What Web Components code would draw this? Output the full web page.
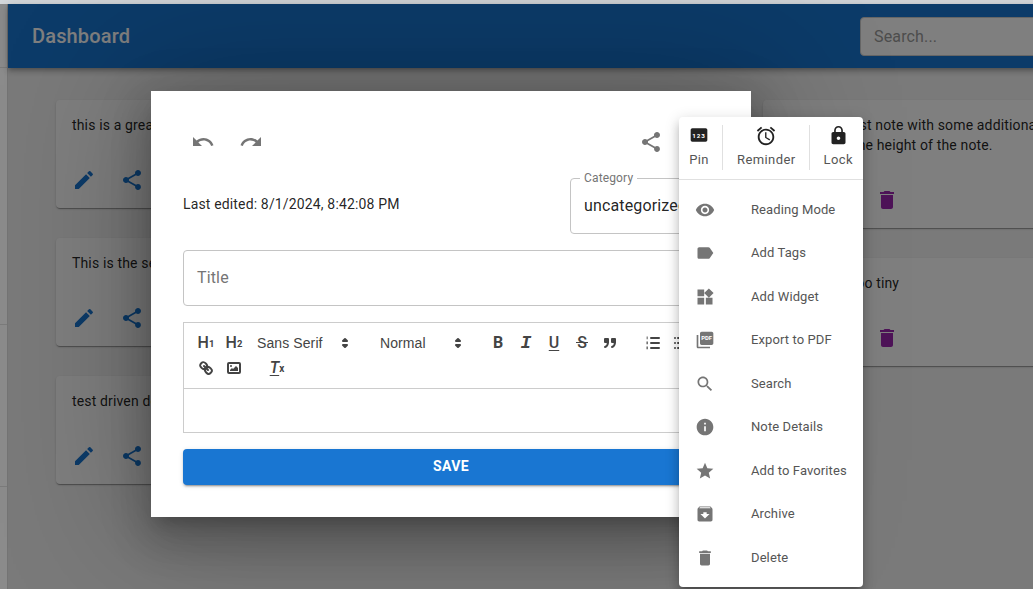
<!DOCTYPE html>
<html>
<head>
<meta charset="utf-8">
<title>Dashboard</title>
<style>
  html, body { margin: 0; height: 100%; overflow: hidden; font-family: Roboto, "Liberation Sans", sans-serif; }
</style>
</head>
<body>

<app-shell>
  <app-header heading="Dashboard" placeholder="Search..."></app-header>
  <note-board>
    <div slot="first">
      <note-card>this is a great note</note-card>
      <note-card>This is the seed</note-card>
      <note-card>test driven development</note-card>
    </div>
    <div slot="third">
      <note-card>This is my test note with some additional text to increase the height of the note.</note-card>
      <note-card>This one is too tiny</note-card>
    </div>
  </note-board>
  <modal-backdrop>
    <note-modal></note-modal>
    <note-menu>
      <top-action slot="top" icon="pin" size="20" class="start">Pin</top-action>
      <top-action slot="top" icon="alarm" size="22" class="mid">Reminder</top-action>
      <top-action slot="top" icon="lock" size="21" class="end">Lock</top-action>
      <menu-item icon="visibility">Reading Mode</menu-item>
      <menu-item icon="label">Add Tags</menu-item>
      <menu-item icon="widgets">Add Widget</menu-item>
      <menu-item icon="pdf">Export to PDF</menu-item>
      <menu-item icon="search">Search</menu-item>
      <menu-item icon="info">Note Details</menu-item>
      <menu-item icon="star">Add to Favorites</menu-item>
      <menu-item icon="archive">Archive</menu-item>
      <menu-item icon="delete">Delete</menu-item>
    </note-menu>
  </modal-backdrop>
</app-shell>

<script>
const ICONS = {
  edit: '<path d="M3 17.25V21h3.75L17.81 9.94l-3.75-3.75L3 17.25zM20.71 7.04c.39-.39.39-1.02 0-1.41l-2.34-2.34a.9959.9959 0 0 0-1.41 0l-1.83 1.83 3.75 3.75 1.83-1.83z"/>',
  share: '<path d="M18 16.08c-.76 0-1.44.3-1.96.77L8.91 12.7c.05-.23.09-.46.09-.7s-.04-.47-.09-.7l7.05-4.11c.54.5 1.25.81 2.04.81 1.66 0 3-1.34 3-3s-1.34-3-3-3-3 1.34-3 3c0 .24.04.47.09.7L8.04 9.81C7.5 9.31 6.79 9 6 9c-1.66 0-3 1.34-3 3s1.34 3 3 3c.79 0 1.5-.31 2.04-.81l7.12 4.16c-.05.21-.08.43-.08.65 0 1.61 1.31 2.92 2.92 2.92s2.92-1.31 2.92-2.92-1.31-2.92-2.92-2.92z"/>',
  delete: '<path d="M6 19c0 1.1.9 2 2 2h8c1.1 0 2-.9 2-2V7H6v12zM19 4h-3.5l-1-1h-5l-1 1H5v2h14V4z"/>',
  undo: '<path d="M12.5 8c-2.65 0-5.05.99-6.9 2.6L2 7v9h9l-3.62-3.62c1.39-1.16 3.16-1.88 5.12-1.88 3.54 0 6.55 2.31 7.6 5.5l2.37-.78C21.08 11.03 17.15 8 12.5 8z"/>',
  redo: '<path d="M18.4 10.6C16.55 8.99 14.15 8 11.5 8c-4.65 0-8.58 3.03-9.96 7.22L3.9 16c1.05-3.19 4.05-5.5 7.6-5.5 1.95 0 3.73.72 5.12 1.88L13 16h9V7l-3.6 3.6z"/>',
  more: '<path d="M12 8c1.1 0 2-.9 2-2s-.9-2-2-2-2 .9-2 2 .9 2 2 2zm0 2c-1.1 0-2 .9-2 2s.9 2 2 2 2-.9 2-2-.9-2-2-2zm0 6c-1.1 0-2 .9-2 2s.9 2 2 2 2-.9 2-2-.9-2-2-2z"/>',
  pin: '<path d="M20 4H4c-1.1 0-2 .9-2 2v12c0 1.1.9 2 2 2h16c1.1 0 2-.9 2-2V6c0-1.1-.9-2-2-2z"/><text x="12" y="15" text-anchor="middle" fill="#fff" font-size="7.5" font-weight="700" letter-spacing="1" font-family="Roboto, sans-serif">123</text>',
  alarm: '<path d="M22 5.72l-4.6-3.86-1.29 1.53 4.6 3.86L22 5.72zM7.88 3.39L6.6 1.86 2 5.71l1.29 1.53 4.59-3.85zM12.5 8H11v6l4.75 2.85.75-1.23-4-2.37V8zM12 4c-4.97 0-9 4.03-9 9s4.03 9 9 9 9-4.03 9-9-4.03-9-9-9zm0 16c-3.87 0-7-3.13-7-7s3.13-7 7-7 7 3.13 7 7-3.13 7-7 7z"/>',
  lock: '<path d="M18 8h-1V6c0-2.76-2.24-5-5-5S7 3.24 7 6v2H6c-1.1 0-2 .9-2 2v10c0 1.1.9 2 2 2h12c1.1 0 2-.9 2-2V10c0-1.1-.9-2-2-2zm-6 9c-1.1 0-2-.9-2-2s.9-2 2-2 2 .9 2 2-.9 2-2 2zm3.1-9H8.9V6c0-1.71 1.39-3.1 3.1-3.1 1.71 0 3.1 1.39 3.1 3.1v2z"/>',
  visibility: '<path d="M12 4.5C7 4.5 2.73 7.61 1 12c1.73 4.39 6 7.5 11 7.5s9.27-3.11 11-7.5c-1.73-4.39-6-7.5-11-7.5zM12 17c-2.76 0-5-2.24-5-5s2.24-5 5-5 5 2.24 5 5-2.24 5-5 5zm0-8c-1.66 0-3 1.34-3 3s1.34 3 3 3 3-1.34 3-3-1.34-3-3-3z"/>',
  label: '<path d="M17.63 5.84C17.27 5.33 16.67 5 16 5L5 5.01C3.9 5.01 3 5.9 3 7v10c0 1.1.9 1.99 2 1.99L16 19c.67 0 1.27-.33 1.63-.84L22 12l-4.37-6.16z"/>',
  widgets: '<path d="M13 13v8h8v-8h-8zM3 21h8v-8H3v8zM3 3v8h8V3H3zm13.66-1.31L11 7.34 16.66 13l5.66-5.66-5.66-5.65z"/>',
  pdf: '<path d="M20 2H8c-1.1 0-2 .9-2 2v12c0 1.1.9 2 2 2h12c1.1 0 2-.9 2-2V4c0-1.1-.9-2-2-2zM4 6H2v14c0 1.1.9 2 2 2h14v-2H4V6z"/><text x="14" y="12.5" text-anchor="middle" fill="#fff" font-size="7" font-weight="700" font-family="Roboto, sans-serif">PDF</text>',
  search: '<path d="M15.5 14h-.79l-.28-.27C15.41 12.59 16 11.11 16 9.5 16 5.91 13.09 3 9.5 3S3 5.91 3 9.5 5.91 16 9.5 16c1.61 0 3.09-.59 4.23-1.57l.27.28v.79l5 4.99L20.49 19l-4.99-5zm-6 0C7.01 14 5 11.99 5 9.5S7.01 5 9.5 5 14 7.01 14 9.5 11.99 14 9.5 14z"/>',
  info: '<path d="M12 2C6.48 2 2 6.48 2 12s4.48 10 10 10 10-4.48 10-10S17.52 2 12 2zm1 15h-2v-6h2v6zm0-8h-2V7h2v2z"/>',
  star: '<path d="M12 17.27L18.18 21l-1.64-7.03L22 9.24l-7.19-.61L12 2 9.19 8.63 2 9.24l5.46 4.73L5.82 21z"/>',
  archive: '<path d="M20.54 5.23l-1.39-1.68C18.88 3.21 18.47 3 18 3H6c-.47 0-.88.21-1.16.55L3.46 5.23C3.17 5.57 3 6.02 3 6.5V19c0 1.1.9 2 2 2h14c1.1 0 2-.9 2-2V6.5c0-.48-.17-.93-.46-1.27zM12 17.5L6.5 12H10v-2h4v2h3.5L12 17.5zM5.12 5l.81-1h12l.94 1H5.12z"/>'
};

class MdIcon extends HTMLElement {
  connectedCallback() {
    const size = this.getAttribute('size') || 24;
    const shadow = this.shadowRoot || this.attachShadow({mode: 'open'});
    shadow.innerHTML = `
      <style>
        :host { display: inline-flex; width: ${size}px; height: ${size}px; color: inherit; flex: none; }
        svg { width: 100%; height: 100%; fill: currentColor; display: block; }
      </style>
      <svg viewBox="0 0 24 24">${ICONS[this.getAttribute('name')] || ''}</svg>`;
  }
}
customElements.define('md-icon', MdIcon);

class AppShell extends HTMLElement {
  constructor() {
    super();
    this.attachShadow({mode: 'open'}).innerHTML = `
      <style>
        :host { display: block; height: 100vh; overflow: hidden; background: #d4d7da; padding-top: 4px; box-sizing: border-box; }
        .row { display: flex; height: 100%; }
        .rail { flex: 0 0 7px; display: grid; grid-template-rows: 64px 257px 162px 1fr; background: #8b8b8b; border-right: 1px solid #747474; }
        .rail div { border-bottom: 1px solid #7b7b7b; }
        .rail div:last-child { border-bottom: 0; }
        .main { position: relative; flex: 0 0 1127px; background: #f5f5f5; }
      </style>
      <div class="row">
        <div class="rail"><div></div><div></div><div></div><div></div></div>
        <div class="main"><slot></slot></div>
      </div>`;
  }
}
customElements.define('app-shell', AppShell);

class AppHeader extends HTMLElement {
  connectedCallback() {
    this.attachShadow({mode: 'open'}).innerHTML = `
      <style>
        :host { display: flex; align-items: center; justify-content: space-between; height: 64px; padding: 0 24px; box-sizing: border-box; background: #1976d2; color: #fff;
          box-shadow: 0 2px 4px -1px rgba(0,0,0,.2), 0 4px 5px 0 rgba(0,0,0,.14), 0 1px 10px 0 rgba(0,0,0,.12); position: relative; }
        h1 { margin: 0; font: 500 20px/32px Roboto, sans-serif; letter-spacing: .15px; }
        .search { width: 251px; height: 39px; box-sizing: border-box; background: #fff; border: 1px solid #ccc; border-radius: 4px; padding: 0 13px; font: 16px/37px Roboto, sans-serif; color: #9a9a9a; letter-spacing: .15px; margin-top: 1px; }
      </style>
      <h1>${this.getAttribute('heading')}</h1>
      <div class="search">${this.getAttribute('placeholder')}</div>`;
  }
}
customElements.define('app-header', AppHeader);

class NoteBoard extends HTMLElement {
  constructor() {
    super();
    this.attachShadow({mode: 'open'}).innerHTML = `
      <style>
        :host { display: grid; grid-template-columns: repeat(3, 323.5px); column-gap: 30px; padding: 32px 48px; align-items: start; }
        ::slotted(div) { display: flex; flex-direction: column; gap: 30px; }
      </style>
      <slot name="first"></slot>
      <div></div>
      <slot name="third"></slot>`;
  }
}
customElements.define('note-board', NoteBoard);

class NoteCard extends HTMLElement {
  constructor() {
    super();
    this.attachShadow({mode: 'open'}).innerHTML = `
      <style>
        :host { display: block; background: #fff; border-radius: 4px; font: 14px/20px Roboto, sans-serif; letter-spacing: .15px; color: rgba(0,0,0,.87);
          box-shadow: 0 2px 1px -1px rgba(0,0,0,.2), 0 1px 1px 0 rgba(0,0,0,.14), 0 1px 3px 0 rgba(0,0,0,.12); }
        .body { padding: 15px 16px 17px; }
        .actions { display: flex; gap: 8px; padding: 8px; }
        .btn { width: 40px; height: 40px; display: flex; align-items: center; justify-content: center; }
        .blue { color: #1976d2; }
        .purple { color: #9c27b0; }
      </style>
      <div class="body"><slot></slot></div>
      <div class="actions">
        <div class="btn blue"><md-icon name="edit"></md-icon></div>
        <div class="btn blue"><md-icon name="share"></md-icon></div>
        <div class="btn purple"><md-icon name="delete"></md-icon></div>
      </div>`;
  }
}
customElements.define('note-card', NoteCard);

class ModalBackdrop extends HTMLElement {
  constructor() {
    super();
    this.attachShadow({mode: 'open'}).innerHTML = `
      <style>
        :host { display: block; position: absolute; inset: 0; background: rgba(0,0,0,.5); }
      </style>
      <slot></slot>`;
  }
}
customElements.define('modal-backdrop', ModalBackdrop);

class OutlinedField extends HTMLElement {
  connectedCallback() {
    const label = this.getAttribute('label');
    this.attachShadow({mode: 'open'}).innerHTML = `
      <style>
        :host { display: block; font: 16px/24px Roboto, sans-serif; letter-spacing: .15px; }
        fieldset { margin: 0; padding: 0 13px; border: 1px solid #c4c4c4; border-radius: 4px; height: 64px; box-sizing: border-box; min-width: 0; display: flex; align-items: center; }
        legend { margin-left: -4px; padding: 0 4px; font-size: 12px; line-height: 16px; color: #757575; }
        .value { color: rgba(0,0,0,.87); white-space: nowrap; overflow: hidden; padding-bottom: 8px; }
        .box { height: 56px; border: 1px solid #c4c4c4; border-radius: 4px; box-sizing: border-box; padding: 0 13px; display: flex; align-items: center; color: #757575; }
      </style>
      ${label
        ? `<fieldset><legend>${label}</legend><div class="value"><slot></slot></div></fieldset>`
        : `<div class="box"><slot></slot></div>`}`;
  }
}
customElements.define('outlined-field', OutlinedField);

class QuillToolbar extends HTMLElement {
  constructor() {
    super();
    const arrows = '<svg viewBox="0 0 18 18"><polygon points="7 11 9 13 11 11 7 11"/><polygon points="7 7 9 5 11 7 7 7"/></svg>';
    this.attachShadow({mode: 'open'}).innerHTML = `
      <style>
        :host { display: flex; flex-wrap: wrap; row-gap: 1px; padding: 8px; border-bottom: 1px solid #ccc; color: #444; font-family: "Liberation Sans", sans-serif; }
        .group { display: flex; margin-right: 15px; }
        .b { width: 28px; height: 24px; display: flex; align-items: center; justify-content: center; line-height: 18px; position: relative; }
        .b svg { width: 18px; height: 18px; display: block; fill: none; stroke: #444; stroke-width: 2; stroke-linecap: round; stroke-linejoin: round; }
        .b svg .f { fill: #444; stroke: none; }
        .h { font: 500 16px/18px Roboto, sans-serif; }
        .h sub { font: 700 9.5px/9px Roboto, sans-serif; vertical-align: -1px; }
        .t { font: 500 16px/18px Roboto, sans-serif; }
        .i { font: italic 700 18px/18px "Liberation Mono", monospace; }
        .u { text-decoration: underline; text-underline-offset: 2px; }
        .s::after { content: ""; position: absolute; left: 8px; right: 8px; top: 11px; height: 1px; background: #444; }
        .tx { font: italic 500 16px/18px Roboto, sans-serif; }
        .tx u { text-underline-offset: 2px; }
        .tx span { font: 700 10px/9px Roboto, sans-serif; vertical-align: -3px; font-style: normal; }
        .picker { display: flex; align-items: center; justify-content: space-between; height: 24px; box-sizing: border-box; padding: 0 2px 0 9px; font-size: 14px; font-weight: 400; color: #444; letter-spacing: .1px; }
        .picker svg { width: 18px; height: 18px; fill: #444; stroke: #444; stroke-width: 2; stroke-linejoin: round; }
        .font { width: 108px; }
        .size { width: 98px; padding-right: 2px; }
      </style>
      <span class="group">
        <span class="b h">H<sub>1</sub></span>
        <span class="b h">H<sub>2</sub></span>
        <span class="picker font">Sans Serif ${arrows}</span>
      </span>
      <span class="group"><span class="picker size">Normal ${arrows}</span></span>
      <span class="group">
        <span class="b t" style="font-weight:700">B</span>
        <span class="b i">I</span>
        <span class="b t u">U</span>
        <span class="b t s">S</span>
        <span class="b"><svg viewBox="0 0 18 18"><rect x="4" y="5" width="3" height="3" class="f" style="stroke:#444"/><rect x="11" y="5" width="3" height="3" class="f" style="stroke:#444"/><path d="M7 8c0 4.03-3 5-3 5"/><path d="M14 8c0 4.03-3 5-3 5"/></svg></span>
      </span>
      <span class="group">
        <span class="b"><svg viewBox="0 0 18 18"><path d="M7 4h8M7 9h8M7 14h8"/><path class="f" opacity=".75" d="M2.6 2.6h1.2v2.6H2.6zM2.4 7.6h1.6v2.6H2.4zM2.4 12.6h1.6v2.6H2.4z"/></svg></span>
        <span class="b"><svg viewBox="0 0 18 18"><path d="M6 4h9M6 9h9M6 14h9M3 4h0M3 9h0M3 14h0"/></svg></span>
      </span>
      <span class="group">
        <span class="b"><svg viewBox="0 0 18 18"><path d="M7 7l4 4"/><path d="M8.9 4.58a3.48 3.48 0 0 1 .36 4.68A3.48 3.48 0 0 1 4.58 8.9C3.19 7.5 2.04 6.4 4.22 4.22S7.5 3.19 8.9 4.58z"/><path d="M13.42 9.1a3.48 3.48 0 0 0-4.68-.36 3.48 3.48 0 0 0 .36 4.68c1.39 1.39 2.5 2.54 4.68.36S14.82 10.5 13.42 9.1z"/></svg></span>
        <span class="b"><svg viewBox="0 0 18 18"><rect x="3" y="4" width="12" height="10" rx="1"/><circle class="f" cx="6" cy="7" r="1"/><polygon class="f" points="5 12 5 11 7 9 8 10 11 7 13 9 13 12 5 12"/></svg></span>
      </span>
      <span class="group"><span class="b tx"><u>T</u><span>x</span></span></span>`;
  }
}
customElements.define('quill-toolbar', QuillToolbar);

class NoteModal extends HTMLElement {
  constructor() {
    super();
    this.attachShadow({mode: 'open'}).innerHTML = `
      <style>
        :host { display: flex; flex-direction: column; gap: 16px; position: absolute; left: 143px; top: 87px; width: 600px; height: 426px; box-sizing: border-box; padding: 31px 32px 32px; background: #fff;
          box-shadow: 0 11px 15px -7px rgba(0,0,0,.2), 0 24px 38px 3px rgba(0,0,0,.14), 0 9px 46px 8px rgba(0,0,0,.12), 0 0 130px 20px rgba(0,0,0,.22); font-family: Roboto, sans-serif; }
        .top { display: flex; justify-content: space-between; color: #757575; height: 40px; margin-bottom: -8px; }
        .icons { display: flex; gap: 8px; }
        .btn { width: 40px; height: 40px; display: flex; align-items: center; justify-content: center; }
        .meta { display: flex; justify-content: space-between; align-items: center; }
        .edited { font-size: 14px; line-height: 20px; color: rgba(0,0,0,.87); letter-spacing: .15px; padding-top: 4px; }
        outlined-field[label] { width: 149px; }
        .editor { border: 1px solid #ccc; }
        .content { height: 43px; }
        .save { height: 36px; box-sizing: border-box; padding-bottom: 2px; display: flex; align-items: center; justify-content: center; background: #1976d2; color: #fff; border-radius: 4px; font-size: 14px; font-weight: 700; letter-spacing: .4px;
          box-shadow: 0 3px 1px -2px rgba(0,0,0,.2), 0 2px 2px 0 rgba(0,0,0,.14), 0 1px 5px 0 rgba(0,0,0,.12); }
      </style>
      <div class="top">
        <div class="icons">
          <div class="btn"><md-icon name="undo"></md-icon></div>
          <div class="btn"><md-icon name="redo"></md-icon></div>
        </div>
        <div class="icons">
          <div class="btn"><md-icon name="share"></md-icon></div>
          <div class="btn"><md-icon name="more"></md-icon></div>
        </div>
      </div>
      <div class="meta">
        <div class="edited">Last edited: 8/1/2024, 8:42:08 PM</div>
        <outlined-field label="Category">uncategorized</outlined-field>
      </div>
      <outlined-field>Title</outlined-field>
      <div class="editor">
        <quill-toolbar></quill-toolbar>
        <div class="content"></div>
      </div>
      <div class="save">SAVE</div>`;
  }
}
customElements.define('note-modal', NoteModal);

class TopAction extends HTMLElement {
  connectedCallback() {
    this.attachShadow({mode: 'open'}).innerHTML = `
      <style>
        :host { display: flex; flex-direction: column; align-items: center; justify-content: space-between; height: 45px; padding: 0 13px 0 10px; box-sizing: border-box; color: #555; font: 13px/16px Roboto, sans-serif; letter-spacing: .4px; }
        :host(.mid) { padding: 0 14px; border-left: 1px solid #e0e0e0; border-right: 1px solid #e0e0e0; flex: 1; }
        :host(.end) { padding: 0 11px 0 13px; }
        md-icon { color: #222; }
        .label { padding-bottom: 2px; white-space: nowrap; }
      </style>
      <md-icon name="${this.getAttribute('icon')}" size="${this.getAttribute('size')}"></md-icon>
      <div class="label"><slot></slot></div>`;
  }
}
customElements.define('top-action', TopAction);

class MenuItem extends HTMLElement {
  connectedCallback() {
    this.attachShadow({mode: 'open'}).innerHTML = `
      <style>
        :host { display: flex; align-items: center; height: 43.5px; padding-left: 16px; color: #555; font: 13px/20px Roboto, sans-serif; letter-spacing: .1px; white-space: nowrap; }
        .ico { flex: 0 0 56px; display: flex; color: #757575; }
      </style>
      <div class="ico"><md-icon name="${this.getAttribute('icon')}" size="20"></md-icon></div>
      <slot></slot>`;
  }
}
customElements.define('menu-item', MenuItem);

class NoteMenu extends HTMLElement {
  constructor() {
    super();
    this.attachShadow({mode: 'open'}).innerHTML = `
      <style>
        :host { display: block; position: absolute; left: 671px; top: 113px; width: 184px; background: #fff; border-radius: 4px;
          box-shadow: 0 5px 5px -3px rgba(0,0,0,.2), 0 8px 10px 1px rgba(0,0,0,.14), 0 3px 14px 2px rgba(0,0,0,.12); }
        .top { display: flex; padding: 8px 0 9px; border-bottom: 1px solid #e0e0e0; }
        .list { padding: 8px 0 7px; }
      </style>
      <div class="top"><slot name="top"></slot></div>
      <div class="list"><slot></slot></div>`;
  }
}
customElements.define('note-menu', NoteMenu);
</script>
</body>
</html>
